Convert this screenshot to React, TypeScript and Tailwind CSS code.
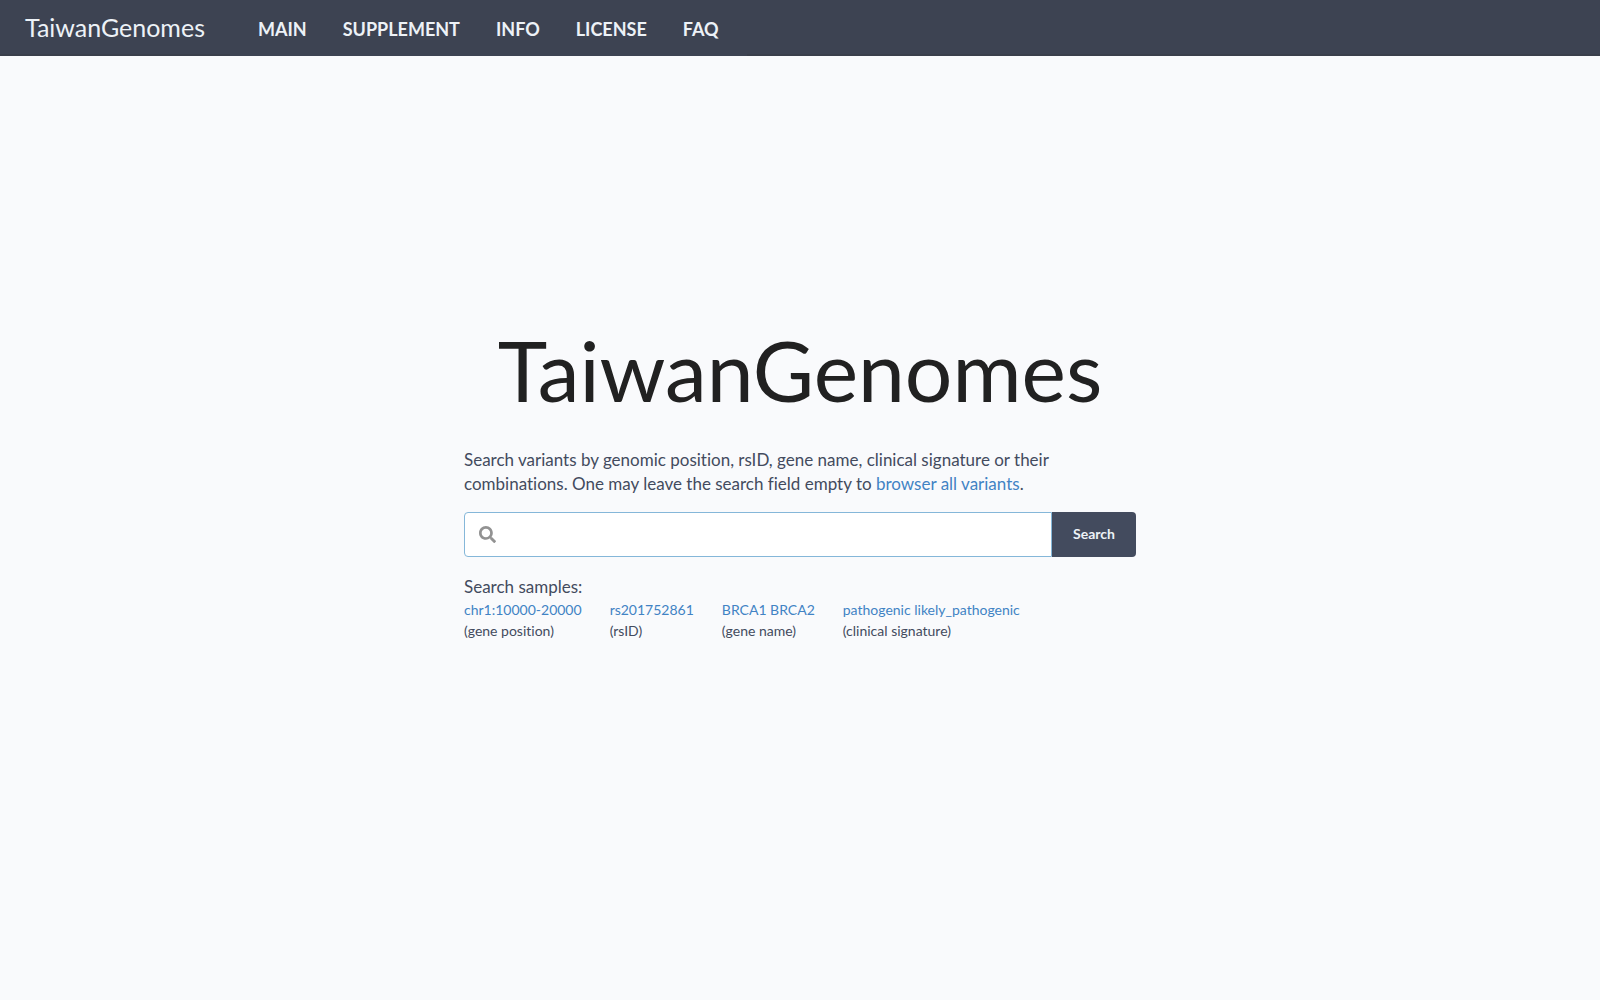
import React from 'react';
import { FaSearch } from 'react-icons/fa';

const navItems = ['MAIN', 'SUPPLEMENT', 'INFO', 'LICENSE', 'FAQ'];

const samples = [
  { query: 'chr1:10000-20000', label: '(gene position)' },
  { query: 'rs201752861', label: '(rsID)' },
  { query: 'BRCA1 BRCA2', label: '(gene name)' },
  { query: 'pathogenic likely_pathogenic', label: '(clinical signature)' },
];

const Navbar: React.FC = () => (
  <nav className="flex h-14 bg-[#3d4352] text-[#edf2f7]">
    <div className="flex items-center border-b-2 border-[#3a3f4b] pt-0.5 pr-[25px] pl-[25px]">
      <a href="#" className="text-[25px]">TaiwanGenomes</a>
    </div>
    <div className="flex items-center gap-9 px-7 pt-0.5 text-lg font-bold">
      {navItems.map(item => (
        <a key={item} href="#">{item}</a>
      ))}
    </div>
    <div className="flex-1 border-b-2 border-[#3a3f4b]" />
  </nav>
);

const SearchForm: React.FC = () => (
  <form className="flex h-[45px]" onSubmit={e => e.preventDefault()}>
    <label className="flex flex-1 items-center rounded-l border border-[#85b7d9] bg-white px-3.5">
      <FaSearch className="size-[17px] shrink-0 text-[#929292]" />
      <input type="text" aria-label="Search variants" className="ml-3 min-w-0 flex-1 outline-none" />
    </label>
    <button type="submit" className="w-[84px] rounded-r bg-[#434b5e] text-sm font-bold text-[#edf2f7]">
      Search
    </button>
  </form>
);

export default function App() {
  return (
    <div className="flex min-h-screen flex-col bg-[#f9fafc] font-[Lato,sans-serif] text-[#434b5e] [font-variant-ligatures:none]">
      <Navbar />
      <main className="flex flex-1 flex-col items-center justify-center pb-24">
        <div className="w-full max-w-[672px]">
          <h1 className="mb-7 text-center text-[84px] leading-[100px] text-[#212121]">TaiwanGenomes</h1>
          <p className="mb-4 text-[17px] leading-6">
            Search variants by genomic position, rsID, gene name, clinical signature or their
            <br />
            combinations. One may leave the search field empty to{' '}
            <a href="#" className="text-[#4183c4]">browser all variants</a>.
          </p>
          <SearchForm />
          <p className="mt-[18px] text-[17px] leading-6">Search samples:</p>
          <div className="flex gap-7 text-sm leading-[21px]">
            {samples.map(({ query, label }) => (
              <div key={query}>
                <a href="#" className="block text-[#4183c4]">{query}</a>
                <div>{label}</div>
              </div>
            ))}
          </div>
        </div>
      </main>
    </div>
  );
}
